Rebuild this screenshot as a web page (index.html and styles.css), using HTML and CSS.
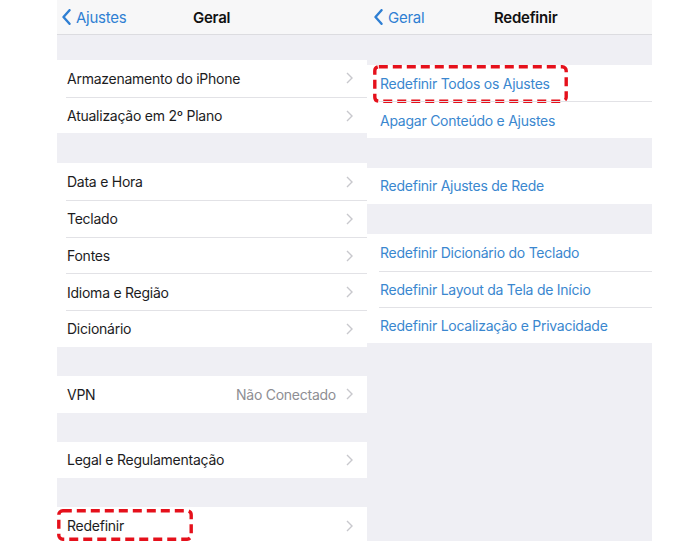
FILE: index.html
```html
<!DOCTYPE html>
<html>
<head>
    <meta charset="utf-8">
    <title>Geral / Redefinir</title>
    <link rel="stylesheet" href="styles.css">
</head>
<body>
    <div class="screens">
        <section class="phone phone-geral">
            <header class="navbar">
                <a class="back">
                    <svg class="back-chev" width="9" height="16" viewBox="0 0 9 16"><path d="M7.5 1.2L1.5 8l6 6.8" fill="none" stroke="#2f7fd3" stroke-width="2.4" stroke-linecap="round" stroke-linejoin="round"/></svg>
                    Ajustes
                </a>
                <h1 class="title">Geral</h1>
            </header>

            <ul class="group">
                <li class="row"><div class="cell"><span class="label">Armazenamento do iPhone</span><svg class="chev" width="7" height="12" viewBox="0 0 7 12"><path d="M1 1l5 5-5 5" fill="none" stroke="#c8c8cd" stroke-width="1.4"/></svg></div></li>
                <li class="row"><div class="cell"><span class="label">Atualização em 2º Plano</span><svg class="chev" width="7" height="12" viewBox="0 0 7 12"><path d="M1 1l5 5-5 5" fill="none" stroke="#c8c8cd" stroke-width="1.4"/></svg></div></li>
            </ul>

            <ul class="group">
                <li class="row"><div class="cell"><span class="label">Data e Hora</span><svg class="chev" width="7" height="12" viewBox="0 0 7 12"><path d="M1 1l5 5-5 5" fill="none" stroke="#c8c8cd" stroke-width="1.4"/></svg></div></li>
                <li class="row"><div class="cell"><span class="label">Teclado</span><svg class="chev" width="7" height="12" viewBox="0 0 7 12"><path d="M1 1l5 5-5 5" fill="none" stroke="#c8c8cd" stroke-width="1.4"/></svg></div></li>
                <li class="row"><div class="cell"><span class="label">Fontes</span><svg class="chev" width="7" height="12" viewBox="0 0 7 12"><path d="M1 1l5 5-5 5" fill="none" stroke="#c8c8cd" stroke-width="1.4"/></svg></div></li>
                <li class="row"><div class="cell"><span class="label">Idioma e Região</span><svg class="chev" width="7" height="12" viewBox="0 0 7 12"><path d="M1 1l5 5-5 5" fill="none" stroke="#c8c8cd" stroke-width="1.4"/></svg></div></li>
                <li class="row"><div class="cell"><span class="label">Dicionário</span><svg class="chev" width="7" height="12" viewBox="0 0 7 12"><path d="M1 1l5 5-5 5" fill="none" stroke="#c8c8cd" stroke-width="1.4"/></svg></div></li>
            </ul>

            <ul class="group group-tight">
                <li class="row"><div class="cell"><span class="label">VPN</span><span class="value">Não Conectado</span><svg class="chev" width="7" height="12" viewBox="0 0 7 12"><path d="M1 1l5 5-5 5" fill="none" stroke="#c8c8cd" stroke-width="1.4"/></svg></div></li>
            </ul>

            <ul class="group group-tight">
                <li class="row"><div class="cell"><span class="label">Legal e Regulamentação</span><svg class="chev" width="7" height="12" viewBox="0 0 7 12"><path d="M1 1l5 5-5 5" fill="none" stroke="#c8c8cd" stroke-width="1.4"/></svg></div></li>
            </ul>

            <ul class="group group-tight">
                <li class="row">
                    <div class="cell"><span class="label">Redefinir</span><svg class="chev" width="7" height="12" viewBox="0 0 7 12"><path d="M1 1l5 5-5 5" fill="none" stroke="#c8c8cd" stroke-width="1.4"/></svg></div>
                    <svg class="mark mark-left" width="136" height="32" viewBox="0 0 136 32"><rect x="1.8" y="1.8" width="132.4" height="28.4" rx="4" fill="none" stroke="#e5101b" stroke-width="3.4" stroke-dasharray="9 5"/></svg>
                </li>
            </ul>
        </section>

        <section class="phone phone-reset">
            <header class="navbar">
                <a class="back">
                    <svg class="back-chev" width="9" height="16" viewBox="0 0 9 16"><path d="M7.5 1.2L1.5 8l6 6.8" fill="none" stroke="#2f7fd3" stroke-width="2.4" stroke-linecap="round" stroke-linejoin="round"/></svg>
                    Geral
                </a>
                <h1 class="title">Redefinir</h1>
            </header>

            <ul class="group">
                <li class="row">
                    <div class="cell"><span class="label action">Redefinir Todos os Ajustes</span></div>
                    <svg class="mark mark-right" width="195" height="38" viewBox="0 0 195 38"><rect x="1.8" y="1.8" width="191.4" height="34.4" rx="4" fill="none" stroke="#e5101b" stroke-width="3.4" stroke-dasharray="9 5"/></svg>
                </li>
                <li class="row"><div class="cell"><span class="label action">Apagar Conteúdo e Ajustes</span></div></li>
            </ul>

            <ul class="group">
                <li class="row"><div class="cell"><span class="label action">Redefinir Ajustes de Rede</span></div></li>
            </ul>

            <ul class="group">
                <li class="row"><div class="cell"><span class="label action">Redefinir Dicionário do Teclado</span></div></li>
                <li class="row"><div class="cell"><span class="label action">Redefinir Layout da Tela de Início</span></div></li>
                <li class="row"><div class="cell"><span class="label action">Redefinir Localização e Privacidade</span></div></li>
            </ul>
        </section>
    </div>
</body>
</html>
```

FILE: styles.css
```css
body {
    margin: 0;
    background: #fff;
    font-family: Inter, "Liberation Sans", Arial, sans-serif;
    color: #1c1c1e;
    letter-spacing: -0.25px;
}
.screens {
    display: flex;
    padding-left: 57px;
    height: 543px;
    overflow: hidden;
}
.phone {
    background: #efeff4;
    overflow: hidden;
}
.phone-geral {
    width: 310px;
    height: 543px;
}
.phone-reset {
    width: 285px;
    height: 541px;
}
.navbar {
    height: 35px;
    box-sizing: border-box;
    background: #f7f7f8;
    border-bottom: 1px solid #dcdce0;
    display: flex;
    align-items: center;
}
.back {
    display: flex;
    align-items: center;
    gap: 5px;
    color: #2f7fd3;
    font-size: 15px;
}
.title {
    margin: 0;
    font-size: 15px;
    font-weight: 600;
    color: #111;
}
.phone-geral .navbar {
    padding-left: 5px;
}
.phone-geral .back {
    width: 131px;
}
.phone-reset .navbar {
    padding-left: 7px;
}
.phone-reset .back {
    width: 120px;
}
.group {
    list-style: none;
    margin: 30px 0 0;
    padding: 0;
    background: #fff;
}
.phone-geral .group:first-of-type {
    margin-top: 25px;
}
.phone-geral .group-tight {
    margin-top: 29px;
}
.row {
    position: relative;
    display: flex;
    height: 36.7px;
    padding-left: 9px;
}
.phone-reset .row {
    height: 36.4px;
    padding-left: 12px;
}
.cell {
    flex: 1;
    display: flex;
    align-items: center;
    padding: 0 14px 0 1px;
}
.phone-reset .cell {
    padding-left: 1px;
}
.row + .row .cell {
    border-top: 1px solid #e2e2e6;
}
.label {
    flex: 1;
    font-size: 14px;
}
.action {
    color: #3a87cf;
}
.value {
    font-size: 14px;
    color: #8e8e93;
    margin-right: 10px;
}
.chev {
    flex: none;
}
.mark {
    position: absolute;
}
.mark-left {
    left: 0;
    top: 2px;
}
.mark-right {
    left: 6px;
    top: 0;
}
```
